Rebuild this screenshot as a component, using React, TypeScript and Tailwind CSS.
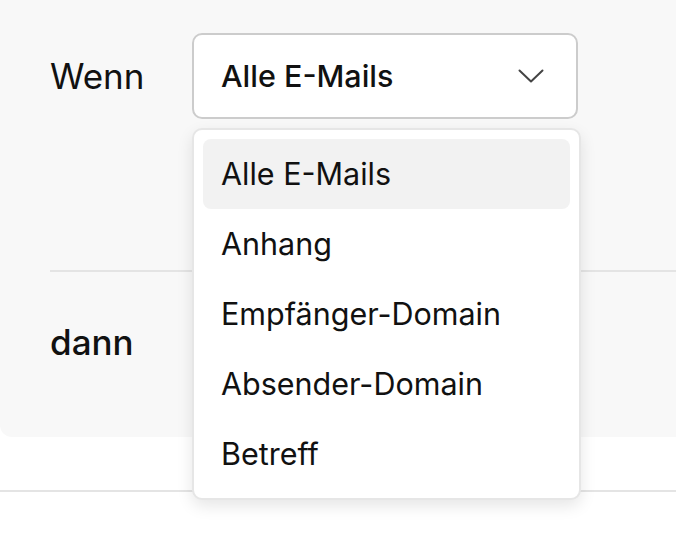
import React from "react";

const options = [
  "Alle E-Mails",
  "Anhang",
  "Empfänger-Domain",
  "Absender-Domain",
  "Betreff",
];

const Chevron = () => (
  <svg width="26" height="14" viewBox="0 0 26 14" fill="none">
    <polyline
      points="1.5,1.5 13,12.5 24.5,1.5"
      stroke="#444444"
      strokeWidth="2"
      strokeLinecap="round"
      strokeLinejoin="round"
    />
  </svg>
);

export default function App() {
  return (
    <div className="relative h-[534px] w-[676px] overflow-hidden bg-white font-['Inter',sans-serif] text-[#111111]">
      <div className="h-[437px] rounded-bl-[12px] bg-[#f8f8f8]">
        <div className="flex items-center pl-[50px] pt-[33px]">
          <span className="w-[142px] text-[35px] leading-none">Wenn</span>
          <button className="flex h-[86px] w-[386px] items-center justify-between rounded-[10px] border-2 border-[#cccccc] bg-white pl-[27px] pr-[32px]">
            <span className="text-[30.5px] font-medium leading-none">
              Alle E-Mails
            </span>
            <Chevron />
          </button>
        </div>
        <div className="ml-[50px] mt-[151px] border-t-2 border-[#e4e4e4]" />
        <div className="flex h-[140px] items-center pl-[50px]">
          <span className="text-[35px] font-medium leading-none">dann</span>
        </div>
      </div>
      <div className="mt-[53px] border-t-2 border-[#e4e4e4]" />

      <div className="absolute left-[192px] top-[128px] w-[389px] rounded-[10px] border-2 border-[#e6e6e6] bg-white p-[9px] shadow-[0_6px_16px_rgba(0,0,0,0.10)]">
        {options.map((o, i) => (
          <div
            key={o}
            className={
              i === 0
                ? "flex h-[70px] items-center rounded-[8px] bg-[#f2f2f2] px-[18px] text-[30.5px] leading-none"
                : "flex h-[70px] items-center rounded-[8px] px-[18px] text-[30.5px] leading-none"
            }
          >
            {o}
          </div>
        ))}
      </div>
    </div>
  );
}
